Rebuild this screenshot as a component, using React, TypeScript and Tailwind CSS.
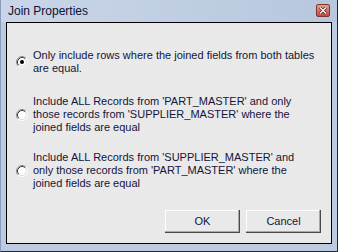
import React from "react";

const font = { fontFamily: '"Liberation Sans", Arial, sans-serif' };

// Classic 3D radio: dark arcs on the top-left, light on the bottom-right
function Radio({ checked }: { checked?: boolean }) {
  return (
    <svg width="12" height="12" viewBox="0 0 12 12" className="shrink-0">
      <circle cx="6" cy="6" r="4.5" fill="#ffffff" />
      <path d="M 2.11 9.89 A 5.5 5.5 0 0 1 9.89 2.11" fill="none" stroke="#8a8a8a" strokeWidth="1" />
      <path d="M 2.82 9.18 A 4.5 4.5 0 0 1 9.18 2.82" fill="none" stroke="#3c3c3c" strokeWidth="1" />
      <path d="M 2.11 9.89 A 5.5 5.5 0 0 0 9.89 2.11" fill="none" stroke="#ffffff" strokeWidth="1" />
      <path d="M 2.82 9.18 A 4.5 4.5 0 0 0 9.18 2.82" fill="none" stroke="#dcdcdc" strokeWidth="1" />
      {checked && <circle cx="6" cy="6" r="2" fill="#000000" />}
    </svg>
  );
}

function Option({ lines, checked, className }: { lines: string[]; checked?: boolean; className?: string }) {
  return (
    <div className={`flex items-center gap-[5px] ${className ?? ""}`}>
      <Radio checked={checked} />
      <div className="text-[11px] leading-[13px] text-[#14143c] whitespace-nowrap">
        {lines.map((l, i) => (
          <div key={i}>{l}</div>
        ))}
      </div>
    </div>
  );
}

function DlgButton({ label }: { label: string }) {
  return (
    <button className="w-[75px] h-[23px] flex items-center justify-center text-[11px] text-[#14143c] bg-[#e9e9e9] shadow-[inset_-1px_-1px_0_#4a4a4a,inset_-2px_-2px_0_#a8a8a8,inset_1px_1px_0_#ffffff]">
      {label}
    </button>
  );
}

export default function App() {
  return (
    <div
      className="w-[338px] h-[252px] flex flex-col bg-[#bdcbe1] border-l border-l-[#8c9bbb] border-r border-r-[#1e2836] border-b border-b-[#1e2836]"
      style={font}
    >
      {/* Title bar */}
      <div className="h-[22px] flex items-center justify-between pl-[7px] pr-[7px] bg-gradient-to-r from-[#c9d6e9] to-[#b8c7de]">
        <span className="text-[12px] text-[#101030]">Join Properties</span>
        <div className="w-[14px] h-[13px] mb-[2px] rounded-[2px] border border-[#7a3a34] bg-gradient-to-b from-[#e99a90] to-[#c4483c] flex items-center justify-center">
          <svg width="8" height="7" viewBox="0 0 8 7">
            <path d="M1 0.5 L7 6.5 M7 0.5 L1 6.5" stroke="#3a1c18" strokeWidth="2.6" />
            <path d="M1 0.5 L7 6.5 M7 0.5 L1 6.5" stroke="#ffffff" strokeWidth="1.4" />
          </svg>
        </div>
      </div>

      {/* Client area */}
      <div className="flex-1 ml-[5px] mr-[5px] mb-[7px] border border-black bg-[#e9e9e9] flex flex-col pl-[9px]">
        <Option
          className="mt-[26px]"
          checked
          lines={["Only include rows where the joined fields from both tables", "are equal."]}
        />
        <Option
          className="mt-[20px]"
          lines={[
            "Include ALL Records from 'PART_MASTER' and only",
            "those records from 'SUPPLIER_MASTER' where the",
            "joined fields are equal",
          ]}
        />
        <Option
          className="mt-[17px]"
          lines={[
            "Include ALL Records from 'SUPPLIER_MASTER' and",
            "only those records from 'PART_MASTER' where the",
            "joined fields are equal",
          ]}
        />
        <div className="mt-auto flex justify-end gap-[6px] pr-[10px] pb-[10px]">
          <DlgButton label="OK" />
          <DlgButton label="Cancel" />
        </div>
      </div>
    </div>
  );
}
